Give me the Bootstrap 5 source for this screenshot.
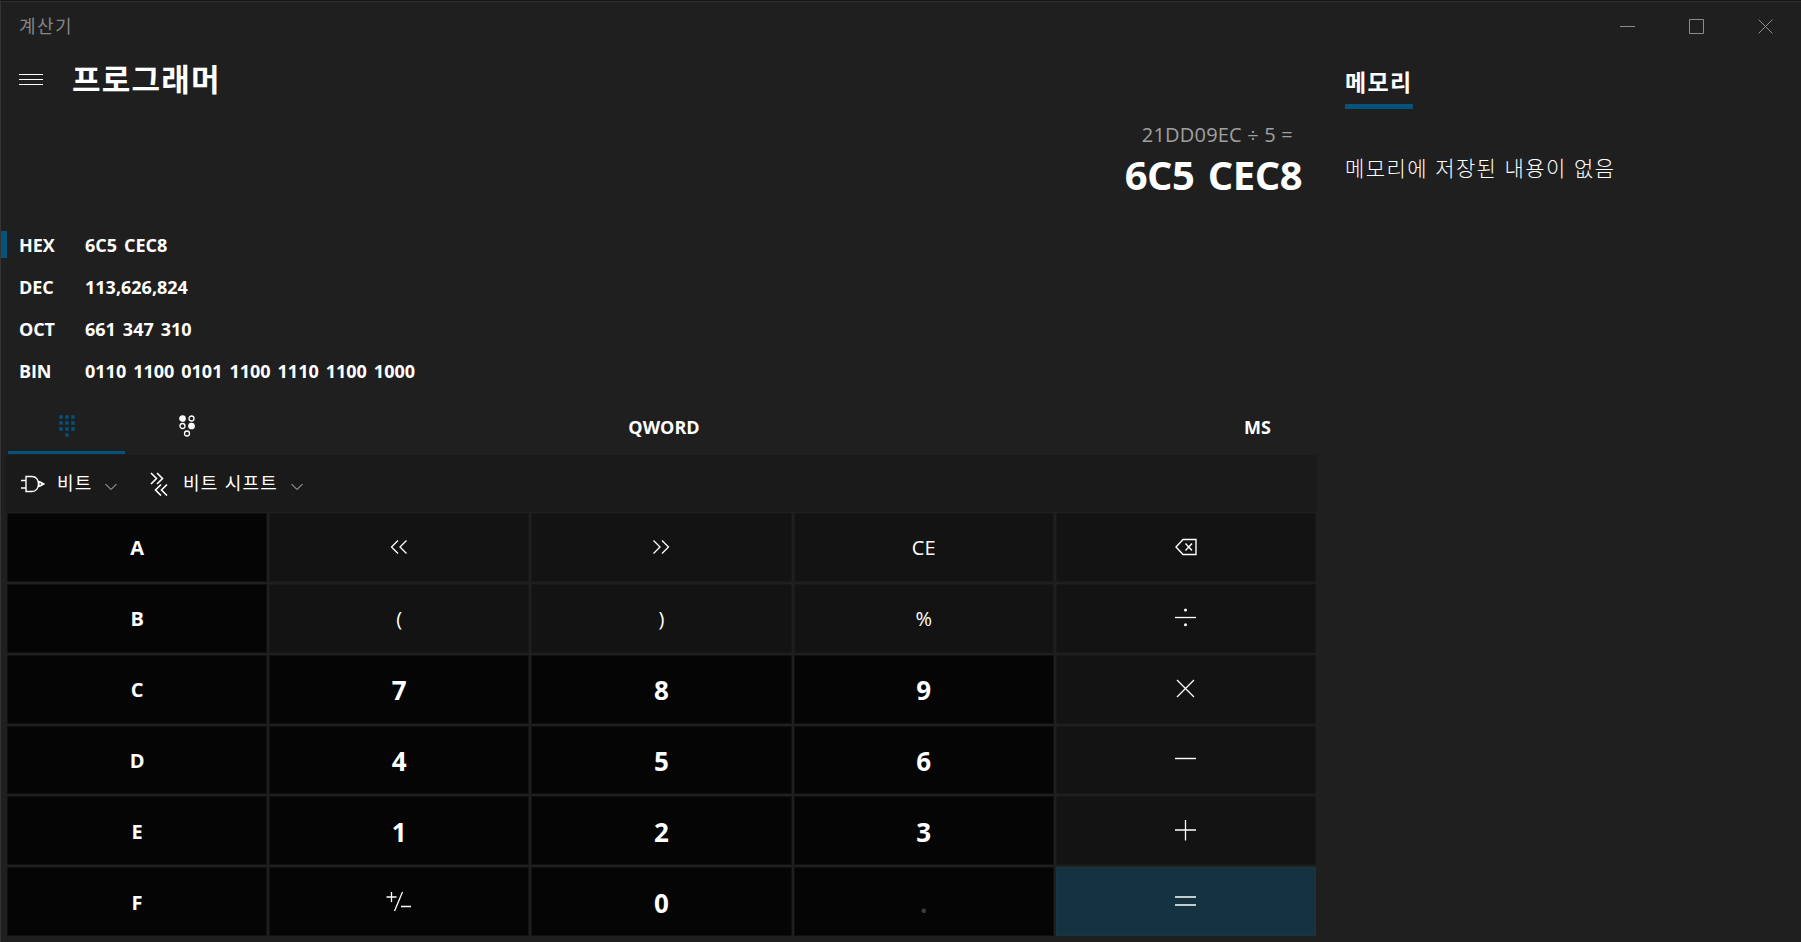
<!DOCTYPE html>
<html lang="ko">
<head>
<meta charset="utf-8">
<meta name="viewport" content="width=device-width, initial-scale=1">
<title>계산기</title>
<link href="https://cdn.jsdelivr.net/npm/bootstrap@5.3.0/dist/css/bootstrap.min.css" rel="stylesheet">
<style>
:root { --accent: #05527a; --shell: #1f1f1f; }
html, body { height: 100%; }
body { margin: 0; background: var(--shell); color: #fff; overflow: hidden; font-family: "Open Sans", "Noto Sans CJK KR", sans-serif; font-size: 18px; line-height: 1; white-space: nowrap; }
svg { display: block; fill: none; stroke: #fff; flex: none; }
.app-window { height: 942px; border-left: 1px solid #333; border-top: 1px solid #10151a; box-shadow: inset 0 1px #303030; }
.titlebar { height: 50px; padding: 0 1px 0 18px; color: #858585; }
.titlebar svg { stroke: #8c8c8c; }
.t-app { letter-spacing: 1.5px; padding-bottom: 2px; }
.caption-btn { width: 69px; height: 51px; }
.ko { font-family: "Noto Sans CJK KR", sans-serif; }
.calc { width: 1317px; }
.mode-head { height: 56px; padding-left: 18px; gap: 29px; }
.mode-head svg { margin-top: 1px; }
.mode-name { font-size: 31px; font-weight: 700; margin: 0 0 2px; letter-spacing: 1.2px; }
.expression { height: 46px; padding: 10px 25px 0 0; font-size: 20px; color: #a0a0a0; letter-spacing: .2px; }
.result { height: 40px; padding: 3px 16px 0 0; font-size: 40px; font-weight: 700; letter-spacing: -.5px; word-spacing: 3.5px; }
.radixes { margin-top: 30px; }
.radix { height: 42px; font-weight: 700; word-spacing: 2.3px; }
.radix > span:not(.radix-mark) { padding-top: 2px; }
.radix-mark { width: 6px; height: 27px; margin-right: 12px; }
.radix.active .radix-mark { background: var(--accent); }
.radix-name { width: 66px; letter-spacing: -.1px; }
.tools { display: grid; grid-template-columns: 120px 120px 834px 1fr 118px; height: 64px; padding-left: 6px; font-weight: 700; }
.tools > * { padding-top: 7px; }
.tools > .tool-tab { padding-top: 9px; }
.tool-tab { border-bottom: 3px solid transparent; margin: 0 2px 1px 1px; }
.tool-tab.active { border-color: var(--accent); }
.t-ms { margin-right: 3px; }
.bitbar { height: 57px; margin: 0 1px 0 5px; padding-left: 15px; background: #1a1a1a; font-size: 18px; }
.bitbar span { letter-spacing: 1.2px; padding-bottom: 3px; }
.t-bit { width: 48px; margin-left: 12px; }
.t-shift { width: 108px; margin-left: 15px; }
.chev { margin-top: 6px; stroke: #ccc; }
.shift-ic { margin-left: 33px; }
.keypad { display: grid; grid-template-columns: repeat(5, 1fr); grid-template-rows: repeat(6, 1fr); gap: 2px; width: 1309px; height: 423px; margin: 1px 0 0 6px; }
.key { background: #131313; border: 1px solid #181818; color: #fff; font-size: 20px; padding: 2px 0 0; border-radius: 0; display: flex; align-items: center; justify-content: center; line-height: 1; }
.key svg { margin-bottom: 3px; }
.key.hexkey, .key.numkey { background: #050505; border-color: #101010; font-weight: 700; }
.key.numkey { font-size: 26px; }
.key.equals { background: #143240; border-color: #183542; }
.key.off { color: #3c3c3c; }
.memory { padding: 15px 0 0 27px; }
.memory-tab { font-size: 23px; font-weight: 700; width: 68px; height: 43px; padding-top: 4px; letter-spacing: 1.3px; border-bottom: 5px solid var(--accent); }
.memory-empty { font-size: 21px; font-weight: 300; letter-spacing: 1.4px; margin: 48px 0 0; }
</style>
</head>
<body>
<div class="app-window d-flex flex-column">
  <header class="titlebar d-flex align-items-center ko">
    <span class="t-app me-auto">계산기</span>
    <div class="caption-btn d-flex align-items-center justify-content-center"><svg width="15" height="15"><path d="M0 7.5h15"/></svg></div>
    <div class="caption-btn d-flex align-items-center justify-content-center"><svg width="15" height="15"><path d="M.5.5h14v14H.5z"/></svg></div>
    <div class="caption-btn d-flex align-items-center justify-content-center"><svg width="15" height="15"><path d="M.5.5l14 14M14.5.5l-14 14"/></svg></div>
  </header>
  <div class="d-flex flex-grow-1">
    <main class="calc">
      <div class="mode-head d-flex align-items-center">
        <svg width="24" height="11"><path d="M0 .5h24M0 5.500h24M0 10.500h24"/></svg>
        <h1 class="mode-name ko"><span>프로그래머</span></h1>
      </div>
      <div class="expression d-flex align-items-center justify-content-end"><span>21DD09EC ÷ 5 =</span></div>
      <div class="result d-flex align-items-center justify-content-end"><span>6C5 CEC8</span></div>
      <div class="radixes">
        <div class="radix active d-flex align-items-center"><span class="radix-mark"></span><span class="radix-name">HEX</span><span>6C5 CEC8</span></div>
        <div class="radix d-flex align-items-center"><span class="radix-mark"></span><span class="radix-name">DEC</span><span>113,626,824</span></div>
        <div class="radix d-flex align-items-center"><span class="radix-mark"></span><span class="radix-name">OCT</span><span>661 347 310</span></div>
        <div class="radix d-flex align-items-center"><span class="radix-mark"></span><span class="radix-name">BIN</span><span>0110 1100 0101 1100 1110 1100 1000</span></div>
      </div>
      <div class="tools">
        <div class="tool-tab active d-flex align-items-center justify-content-center">
          <svg width="16" height="22" style="fill:#05527a;stroke:none"><path d="M.3.300h3.400v3.400H.3zM6.300.3h3.400v3.400H6.300zM12.300.3h3.400v3.400h-3.400zM.3 6.300h3.400v3.400H.3zM6.300 6.300h3.400v3.400H6.300zM12.300 6.300h3.400v3.400h-3.400zM.3 12.300h3.400v3.400H.3zM6.300 12.300h3.400v3.400H6.300zM12.300 12.300h3.400v3.400h-3.400zM6.300 18.300h3.400v3.400H6.300z"/></svg>
        </div>
        <div class="tool-tab d-flex align-items-center justify-content-center">
          <svg width="16" height="22" stroke-width="1.300"><circle cx="3.500" cy="3.500" r="2.700" fill="#fff"/><circle cx="12.500" cy="3.500" r="2.500"/><circle cx="3.500" cy="11" r="2.500"/><circle cx="12.500" cy="11" r="2.700" fill="#fff"/><circle cx="8" cy="18.500" r="2.500"/></svg>
        </div>
        <div class="d-flex align-items-center justify-content-center"><span>QWORD</span></div>
        <div></div>
        <div class="d-flex align-items-center justify-content-center"><span class="t-ms">MS</span></div>
      </div>
      <div class="bitbar d-flex align-items-center ko">
        <svg width="24" height="18" stroke-width="1.400"><path d="M0 5.500h5M0 13h5M5 1.500h6c4 0 6.500 3.300 6.500 7.500s-2.500 7.500-6.500 7.500H5zM17.500 6.500L23 9l-5.500 2.500"/><circle cx="19.300" cy="9" r="1.700"/></svg>
        <span class="t-bit">비트</span>
        <svg class="chev" width="12" height="8"><path d="M.5 1L6 6.500 11.500 1"/></svg>
        <svg class="shift-ic" width="18" height="24" stroke-width="1.600"><path d="M1 1l5.500 5.500L1 12M7 1l5.500 5.500L7 12M11 12.500L5.500 18 11 23.500M17 12.500L11.500 18l5.500 5.500"/></svg>
        <span class="t-shift">비트 시프트</span>
        <svg class="chev" width="12" height="8"><path d="M.5 1L6 6.500 11.500 1"/></svg>
      </div>
      <div class="keypad">
        <button class="btn key hexkey">A</button>
        <button class="btn key"><svg width="18" height="14" stroke-width="1.300"><path d="M8 .5L1.500 7 8 13.500M16.500.5L10 7l6.500 6.500"/></svg></button>
        <button class="btn key"><svg width="18" height="14" stroke-width="1.300"><path d="M1.500.5L8 7l-6.500 6.500M10 .5L16.500 7 10 13.500"/></svg></button>
        <button class="btn key">CE</button>
        <button class="btn key"><svg width="22" height="18" stroke-width="1.400"><path d="M8 1.500h13v15H8L1 9zM10.500 5.500l6.500 7M17 5.500l-6.500 7"/></svg></button>

        <button class="btn key hexkey">B</button>
        <button class="btn key">(</button>
        <button class="btn key">)</button>
        <button class="btn key">%</button>
        <button class="btn key"><svg width="21" height="21" stroke-width="1.300"><path d="M0 10.500h21"/><circle cx="10.500" cy="3" r="1.500" fill="#fff" stroke="none"/><circle cx="10.500" cy="17.800" r="1.500" fill="#fff" stroke="none"/></svg></button>

        <button class="btn key hexkey">C</button>
        <button class="btn key numkey">7</button>
        <button class="btn key numkey">8</button>
        <button class="btn key numkey">9</button>
        <button class="btn key"><svg width="21" height="21" stroke-width="1.300"><path d="M2 2l17 17M19 2L2 19"/></svg></button>

        <button class="btn key hexkey">D</button>
        <button class="btn key numkey">4</button>
        <button class="btn key numkey">5</button>
        <button class="btn key numkey">6</button>
        <button class="btn key"><svg width="21" height="21" stroke-width="1.400"><path d="M0 9.500h21"/></svg></button>

        <button class="btn key hexkey">E</button>
        <button class="btn key numkey">1</button>
        <button class="btn key numkey">2</button>
        <button class="btn key numkey">3</button>
        <button class="btn key"><svg width="21" height="21" stroke-width="1.300"><path d="M0 10h21M10.500 0v20.500"/></svg></button>

        <button class="btn key hexkey">F</button>
        <button class="btn key numkey"><svg width="26" height="21" stroke-width="1.300"><path d="M.5 6h10M5.500 1v10M8.500 20L16.500 1M15 15.500h10"/></svg></button>
        <button class="btn key numkey">0</button>
        <button class="btn key numkey off">.</button>
        <button class="btn key equals"><svg width="21" height="21" stroke-width="1.400"><path d="M0 6h21M0 14h21"/></svg></button>
      </div>
    </main>
    <aside class="memory ko">
      <div class="memory-tab"><span>메모리</span></div>
      <p class="memory-empty"><span>메모리에 저장된 내용이 없음</span></p>
    </aside>
  </div>
</div>
<script src="https://cdn.jsdelivr.net/npm/bootstrap@5.3.0/dist/js/bootstrap.bundle.min.js"></script>
</body>
</html>
